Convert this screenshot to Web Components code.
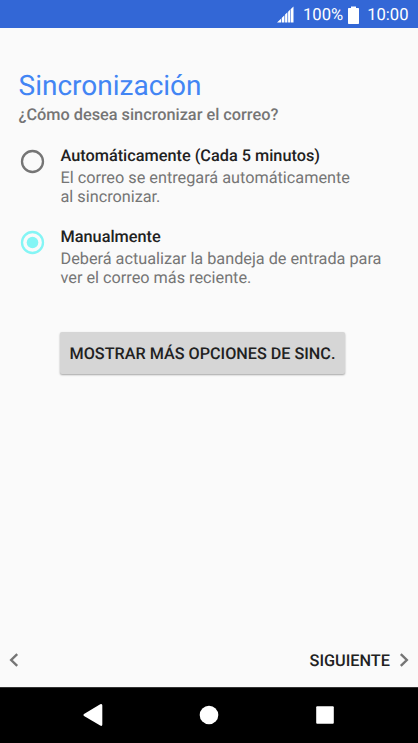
<!DOCTYPE html>
<html lang="es">
<head>
<meta charset="UTF-8">
<meta name="viewport" content="width=device-width, initial-scale=1.0">
<title>Sincronización</title>
<style>
    body {
        margin: 0;
        height: 100vh;
        overflow: hidden;
        display: flex;
        flex-direction: column;
        background-color: #fafafa;
        color: #212121;
        font-family: Roboto, "Liberation Sans", sans-serif;
        font-size: 16.3px;
        text-rendering: geometricPrecision;
    }
</style>
</head>
<body>
    <status-bar battery="100%" time="10:00"></status-bar>
    <sync-page>
        <span slot="title">Sincronización</span>
        <span slot="question">¿Cómo desea sincronizar el correo?</span>
        <radio-option>
            <span slot="label">Automáticamente (Cada 5 minutos)</span>
            El correo se entregará automáticamente<br>al sincronizar.
        </radio-option>
        <radio-option checked>
            <span slot="label">Manualmente</span>
            Deberá actualizar la bandeja de entrada para<br>ver el correo más reciente.
        </radio-option>
        <raised-button>MOSTRAR MÁS OPCIONES DE SINC.</raised-button>
    </sync-page>
    <wizard-footer>SIGUIENTE</wizard-footer>
    <navigation-bar></navigation-bar>

<script>
    class StatusBar extends HTMLElement {
        constructor() {
            super()
            const root = this.attachShadow({ mode: 'open' })
            root.innerHTML = `
                <style>
                    :host {
                        height: 28px;
                        flex: none;
                        display: flex;
                        align-items: center;
                        justify-content: flex-end;
                        box-sizing: border-box;
                        padding: 1px 9.500px 0 0;
                        background-color: #3367d6;
                        color: #fff;
                        font-size: 16.6px;
                        line-height: 27px;
                    }

                    svg {
                        display: block;
                        fill: #fff;
                    }

                    span {
                        padding-top: 1px;
                    }

                    .signal {
                        margin-right: 9.500px;
                    }

                    .battery {
                        margin: 0 8.500px 0 4.500px;
                    }
                </style>
                <svg class="signal" width="17" height="17" viewBox="0 0 17 17">
                    <path d="M0 16.500L4 12.800V16.500ZM4.700 12L7.400 9.300V16.500H4.700ZM8.100 8.600L10.400 6.300V16.500H8.100ZM11.100 5.700L13 3.800V16.500H11.100ZM13.600 3.300L16.500 0.500V16.500H13.600Z"/>
                </svg>
                <span class="level"></span>
                <svg class="battery" width="11" height="18" viewBox="0 0 11 18">
                    <path d="M3 0.500H8V2H10.300Q11 2 11 2.700V17.300Q11 18 10.300 18H0.700Q0 18 0 17.300V2.700Q0 2 0.700 2H3Z"/>
                </svg>
                <span class="time"></span>
            `
        }

        connectedCallback() {
            this.shadowRoot.querySelector('.level').textContent = this.getAttribute('battery')
            this.shadowRoot.querySelector('.time').textContent = this.getAttribute('time')
        }
    }

    class SyncPage extends HTMLElement {
        constructor() {
            super()
            const root = this.attachShadow({ mode: 'open' })
            root.innerHTML = `
                <style>
                    :host {
                        flex: 1;
                        display: block;
                        padding: 41px 18.500px 0;
                    }

                    h1 {
                        margin: 0;
                        color: #4285f4;
                        font-size: 28px;
                        font-weight: 400;
                        line-height: 34px;
                    }

                    p {
                        margin: 2px 0 20.500px;
                        color: #757575;
                        font-weight: 500;
                        line-height: 20px;
                    }
                </style>
                <h1><slot name="title"></slot></h1>
                <p><slot name="question"></slot></p>
                <slot></slot>
            `
        }
    }

    class RadioOption extends HTMLElement {
        constructor() {
            super()
            const root = this.attachShadow({ mode: 'open' })
            root.innerHTML = `
                <style>
                    :host {
                        display: flex;
                        gap: 16px;
                        margin-bottom: 20.600px;
                    }

                    svg {
                        flex: none;
                        margin: 3.900px 0 0 1px;
                        fill: none;
                        stroke: #757575;
                        stroke-width: 2.300;
                    }

                    .dot {
                        display: none;
                        fill: #84f5f5;
                        stroke: none;
                    }

                    :host([checked]) svg {
                        stroke: #84f5f5;
                    }

                    :host([checked]) .dot {
                        display: block;
                    }

                    .label {
                        color: #212121;
                        font-weight: 500;
                        line-height: 20px;
                    }

                    .text {
                        margin-top: 2.500px;
                        color: #757575;
                        font-size: 16.250px;
                        line-height: 19px;
                        white-space: nowrap;
                    }
                </style>
                <svg width="25" height="25" viewBox="0 0 25 25">
                    <circle cx="12.500" cy="12.500" r="10.500"/>
                    <circle class="dot" cx="12.500" cy="12.500" r="5.800"/>
                </svg>
                <div>
                    <div class="label"><slot name="label"></slot></div>
                    <div class="text"><slot></slot></div>
                </div>
            `
        }
    }

    class RaisedButton extends HTMLElement {
        constructor() {
            super()
            const root = this.attachShadow({ mode: 'open' })
            root.innerHTML = `
                <style>
                    :host {
                        display: flex;
                        width: 285px;
                        margin: 44.900px 0 0 41.500px;
                    }

                    button {
                        width: 100%;
                        height: 42px;
                        padding: 1px 0 0;
                        border: 0;
                        border-radius: 2px;
                        background-color: #d6d6d6;
                        box-shadow: 0 1px 2px rgba(0, 0, 0, 0.35);
                        color: #212121;
                        font: 500 16.200px/41px Roboto, "Liberation Sans", sans-serif;
                        text-rendering: inherit;
                        white-space: nowrap;
                    }
                </style>
                <button><slot></slot></button>
            `
        }
    }

    class WizardFooter extends HTMLElement {
        constructor() {
            super()
            const root = this.attachShadow({ mode: 'open' })
            root.innerHTML = `
                <style>
                    :host {
                        height: 55px;
                        flex: none;
                        display: flex;
                        align-items: center;
                        box-sizing: border-box;
                        padding: 0 9px;
                        font-weight: 500;
                    }

                    svg {
                        display: block;
                        fill: none;
                        stroke: #757575;
                        stroke-width: 2.400;
                    }

                    .next {
                        margin: 0 9px 0 auto;
                        padding-top: 1px;
                    }
                </style>
                <svg width="10" height="14" viewBox="0 0 10 14"><path d="M8.200 1.200L2.200 7L8.200 12.800"/></svg>
                <span class="next"><slot></slot></span>
                <svg width="10" height="14" viewBox="0 0 10 14"><path d="M1.800 1.200L7.800 7L1.800 12.800"/></svg>
            `
        }
    }

    class NavigationBar extends HTMLElement {
        constructor() {
            super()
            const root = this.attachShadow({ mode: 'open' })
            root.innerHTML = `
                <style>
                    :host {
                        height: 56px;
                        flex: none;
                        display: flex;
                        align-items: center;
                        justify-content: center;
                        gap: 92px;
                        background-color: #000;
                        box-shadow: inset 0 1px #333;
                    }

                    svg {
                        display: block;
                        fill: #fff;
                    }
                </style>
                <svg width="24" height="24" viewBox="0 0 24 24"><path d="M19.200 1.300Q21.300 0.300 21.300 2.500V21.500Q21.300 23.700 19.200 22.600L3 13Q1.600 12 3 11Z"/></svg>
                <svg width="24" height="24" viewBox="0 0 24 24"><circle cx="12" cy="12" r="9.300"/></svg>
                <svg width="24" height="24" viewBox="0 0 24 24"><rect x="3.200" y="3.200" width="17.600" height="17.600" rx="1"/></svg>
            `
        }
    }

    customElements.define('status-bar', StatusBar)
    customElements.define('sync-page', SyncPage)
    customElements.define('radio-option', RadioOption)
    customElements.define('raised-button', RaisedButton)
    customElements.define('wizard-footer', WizardFooter)
    customElements.define('navigation-bar', NavigationBar)
</script>
</body>
</html>
